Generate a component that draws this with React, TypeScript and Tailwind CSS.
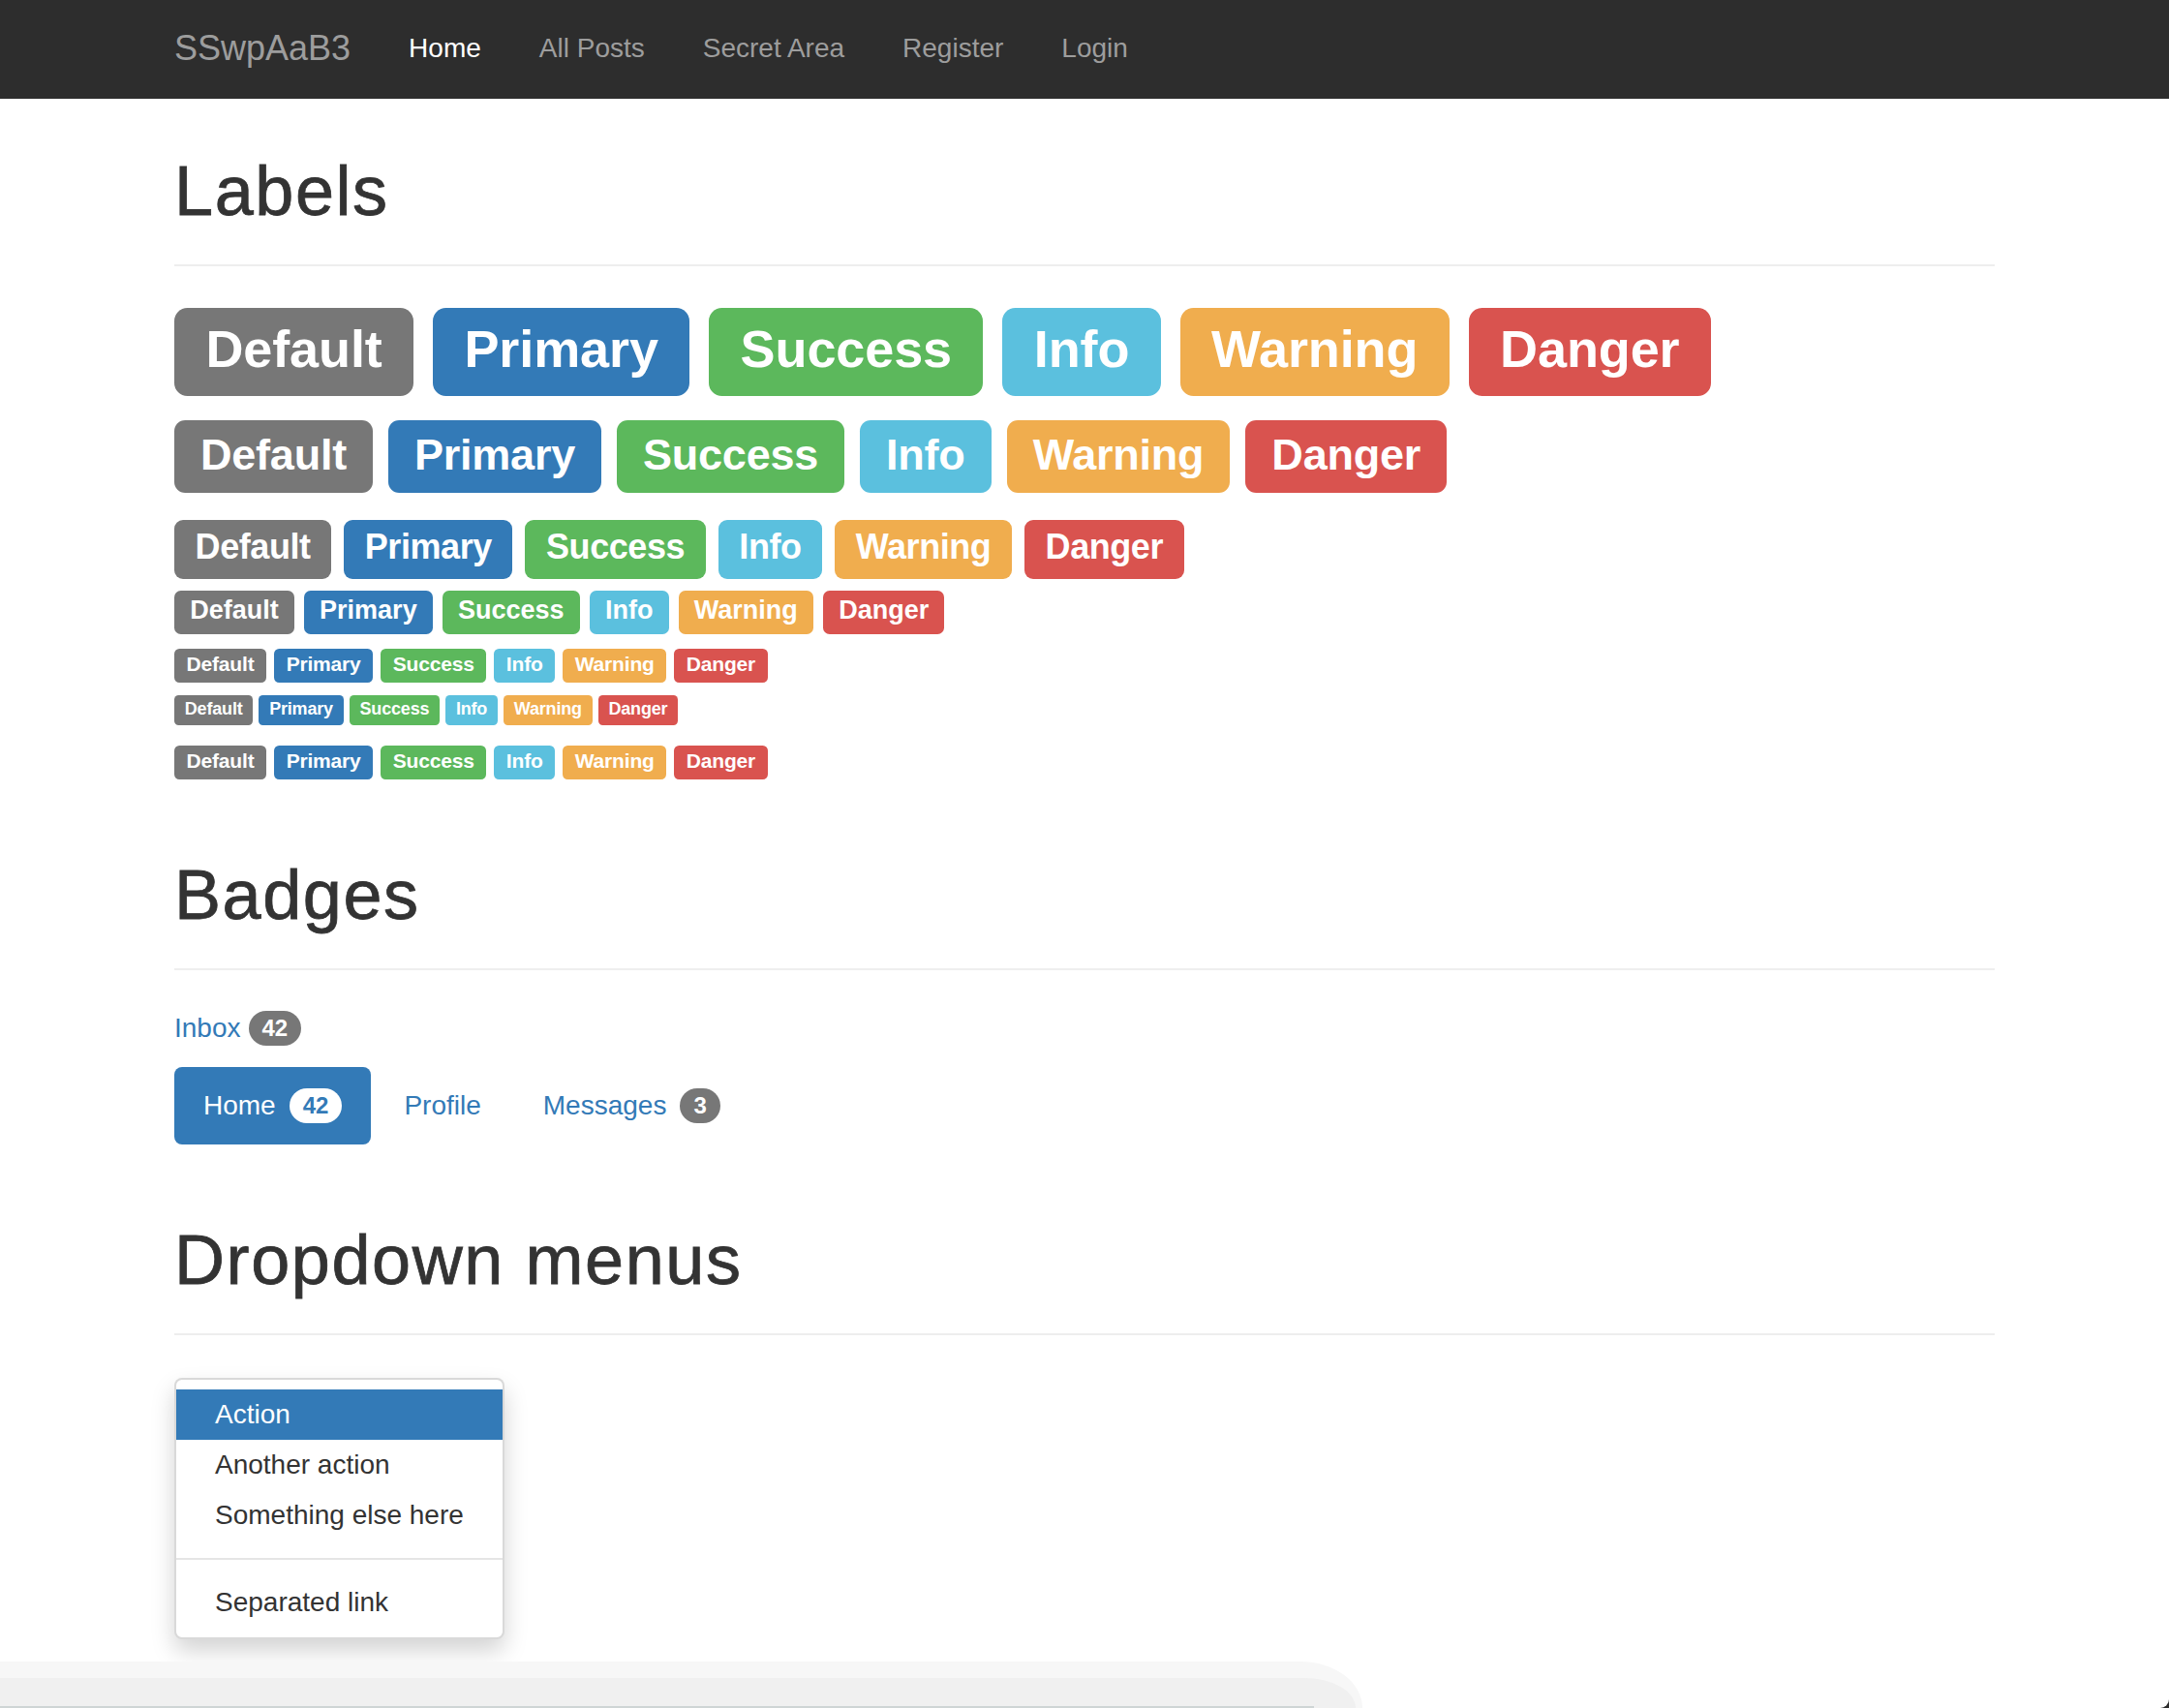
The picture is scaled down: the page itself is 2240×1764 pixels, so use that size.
import React from 'react';

const tones = [
  { name: 'Default', bg: 'bg-[#777777]' },
  { name: 'Primary', bg: 'bg-[#337ab7]' },
  { name: 'Success', bg: 'bg-[#5cb85c]' },
  { name: 'Info', bg: 'bg-[#5bc0de]' },
  { name: 'Warning', bg: 'bg-[#f0ad4e]' },
  { name: 'Danger', bg: 'bg-[#d9534f]' },
];

// h1..h6 then a plain paragraph, same as the bootstrap demo page
const labelRows = [
  { size: 'text-[54px] tracking-[-0.002em]', gap: 'gap-[20px]', mt: 'mt-[43px]' },
  { size: 'text-[45px] tracking-[-0.005em]', gap: 'gap-[16px]', mt: 'mt-[25px]' },
  { size: 'text-[36px] tracking-[-0.012em]', gap: 'gap-[13px]', mt: 'mt-[28px]' },
  { size: 'text-[27px] tracking-[0em]', gap: 'gap-[10px]', mt: 'mt-[12px]' },
  { size: 'text-[21px] tracking-[-0.009em]', gap: 'gap-[8px]', mt: 'mt-[15px]' },
  { size: 'text-[18px] tracking-[-0.01em]', gap: 'gap-[6px]', mt: 'mt-[13px]' },
  { size: 'text-[21px] tracking-[-0.009em]', gap: 'gap-[8px]', mt: 'mt-[21px]' },
];

const navLinks = ['Home', 'All Posts', 'Secret Area', 'Register', 'Login'];

function PageHeader({ title, className }: { title: string; className: string }) {
  return (
    <div className={`${className} border-b-2 border-[#eeeeee] pb-[36px]`}>
      <h1 className="text-[72px] leading-[79px] font-normal tracking-[0.022em] text-[#333333] [-webkit-text-stroke:0.8px_#333333]">
        {title}
      </h1>
    </div>
  );
}

function Badge({ children, light = false, className = '' }: { children: React.ReactNode; light?: boolean; className?: string }) {
  return (
    <span
      className={`${className} inline-block rounded-[20px] px-[14px] py-[6px] text-[24px] font-bold leading-none ${
        light ? 'bg-white text-[#337ab7]' : 'bg-[#777777] text-white'
      }`}
    >
      {children}
    </span>
  );
}

export default function App() {
  return (
    <div className="relative h-[1764px] overflow-hidden bg-white font-['Liberation_Sans',Arial,sans-serif] text-[28px] text-[#333333]">
      <nav className="h-[102px] bg-[#2d2d2d]">
        <div className="mx-auto flex w-[1880px]">
          <a className="pr-[30px] pt-[30px] text-[36px] leading-[40px] text-[#9d9d9d]">SSwpAaB3</a>
          {navLinks.map((link) => (
            <a
              key={link}
              className={`px-[30px] pt-[30px] text-[28px] leading-[40px] ${link === 'Home' ? 'text-white' : 'text-[#9d9d9d]'}`}
            >
              {link}
            </a>
          ))}
        </div>
      </nav>

      <main className="mx-auto w-[1880px]">
        <PageHeader title="Labels" className="mt-[56px]" />

        {labelRows.map((row, i) => (
          <div key={i} className={`${row.mt} flex items-start ${row.gap}`}>
            {tones.map((t) => (
              <span
                key={t.name}
                className={`${row.size} ${t.bg} inline-block rounded-[.25em] px-[.6em] pt-[.2em] pb-[.3em] font-bold leading-[1.18] text-white`}
              >
                {t.name}
              </span>
            ))}
          </div>
        ))}

        <PageHeader title="Badges" className="mt-[80px]" />

        <div className="mt-[40px] flex h-[40px] items-center leading-[40px]">
          <a className="text-[#337ab7]">Inbox</a>
          <Badge className="ml-[8px]">42</Badge>
        </div>

        <ul className="mt-[20px] flex gap-[4px]">
          <li className="flex items-center rounded-[8px] bg-[#337ab7] px-[30px] py-[20px] leading-[40px] text-white">
            Home
            <Badge light className="ml-[14px]">42</Badge>
          </li>
          <li className="flex items-center px-[30px] py-[20px] leading-[40px] text-[#337ab7]">Profile</li>
          <li className="flex items-center px-[30px] py-[20px] leading-[40px] text-[#337ab7]">
            Messages
            <Badge className="ml-[14px]">3</Badge>
          </li>
        </ul>

        <PageHeader title="Dropdown menus" className="mt-[80px]" />

        <ul className="mt-[44px] w-max min-w-[324px] whitespace-nowrap rounded-[8px] border-2 border-[rgba(0,0,0,0.15)] bg-white py-[10px] shadow-[0_12px_24px_rgba(0,0,0,0.175)]">
          <li className="bg-[#337ab7] px-[40px] py-[6px] leading-[40px] text-white">Action</li>
          <li className="px-[40px] py-[6px] leading-[40px] text-[#333333]">Another action</li>
          <li className="px-[40px] py-[6px] leading-[40px] text-[#333333]">Something else here</li>
          <li className="my-[18px] h-[2px] bg-[#e5e5e5]" />
          <li className="px-[40px] py-[6px] leading-[40px] text-[#333333]">Separated link</li>
        </ul>
      </main>

      {/* grey strip over the bottom edge of the capture */}
      <div className="absolute bottom-0 left-0 h-[48px] w-[1407px] rounded-tr-[64px_48px] bg-[#f7f7f7]" />
      <div className="absolute bottom-0 left-0 h-[31px] w-[1400px] rounded-tr-[53px_31px] bg-[#f0f0f0]" />
      <div className="absolute bottom-0 left-0 h-[2px] w-[1357px] bg-[#cfd5d5]" />

      <div className="absolute bottom-0 right-0 h-[11px] w-[9px] bg-[#2d2d2d]">
        <div className="h-full w-full rounded-br-[11px] bg-white" />
      </div>
    </div>
  );
}
